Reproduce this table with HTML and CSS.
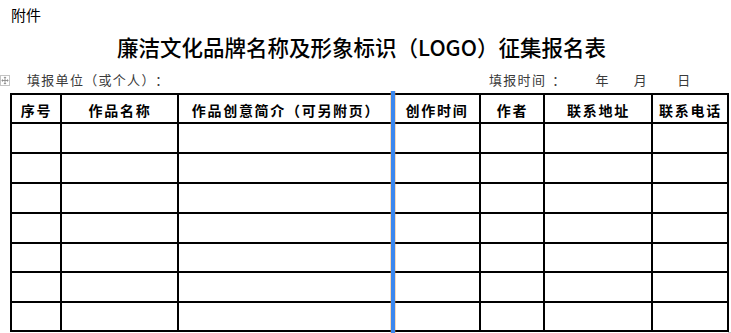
FILE: index.html
```html
<!DOCTYPE html>
<html lang="zh">
<head>
<meta charset="utf-8">
<title>廉洁文化品牌名称及形象标识（LOGO）征集报名表</title>
<link rel="stylesheet" href="styles.css">
</head>
<body>
<div class="page">
  <div class="att">附件</div>
  <h1 class="title">廉洁文化品牌名称及形象标识（LOGO）征集报名表</h1>
  <div class="info">
    <span class="handle">
      <svg width="10" height="11" viewBox="0 0 10 11">
        <rect x="0.5" y="0.5" width="9" height="10" fill="#fff" stroke="#c4c4c4"/>
        <path d="M5 2.6V8.4M2.2 5.5H7.8" stroke="#8a8a8a" stroke-width="0.9" fill="none"/>
        <path d="M5 1.5L3.5 3.1H6.5Z M5 9.5L3.5 7.9H6.5Z M1.3 5.5L2.9 4V7Z M8.7 5.5L7.1 4V7Z" fill="#8a8a8a"/>
      </svg>
    </span>
    <span class="unit">填报单位（或个人）<span class="colon">：</span></span>
    <span class="date">
      <span class="date-label">填报时间<span class="colon">：</span></span>
      <span class="y">年</span>
      <span class="m">月</span>
      <span class="d">日</span>
    </span>
  </div>
  <div class="sheet">
    <div class="grid">
      <div class="cell head">序号</div>
      <div class="cell head">作品名称</div>
      <div class="cell head">作品创意简介（可另附页）</div>
      <div class="cell head">创作时间</div>
      <div class="cell head">作者</div>
      <div class="cell head">联系地址</div>
      <div class="cell head">联系电话</div>

      <div class="cell"></div><div class="cell"></div><div class="cell"></div><div class="cell"></div><div class="cell"></div><div class="cell"></div><div class="cell"></div>
      <div class="cell"></div><div class="cell"></div><div class="cell"></div><div class="cell"></div><div class="cell"></div><div class="cell"></div><div class="cell"></div>
      <div class="cell"></div><div class="cell"></div><div class="cell"></div><div class="cell"></div><div class="cell"></div><div class="cell"></div><div class="cell"></div>
      <div class="cell"></div><div class="cell"></div><div class="cell"></div><div class="cell"></div><div class="cell"></div><div class="cell"></div><div class="cell"></div>
      <div class="cell"></div><div class="cell"></div><div class="cell"></div><div class="cell"></div><div class="cell"></div><div class="cell"></div><div class="cell"></div>
      <div class="cell"></div><div class="cell"></div><div class="cell"></div><div class="cell"></div><div class="cell"></div><div class="cell"></div><div class="cell"></div>
      <div class="cell"></div><div class="cell"></div><div class="cell"></div><div class="cell"></div><div class="cell"></div><div class="cell"></div><div class="cell"></div>
    </div>
    <div class="col-marker"></div>
    <div class="resize"></div>
  </div>
</div>
</body>
</html>
```

FILE: styles.css
```css
* { box-sizing: border-box; }
html, body { margin: 0; padding: 0; background: #fff; }
body {
  width: 731px;
  height: 333px;
  overflow: hidden;
  font-family: "Noto Sans CJK SC", "Noto Sans", sans-serif;
  color: #000;
}
.page { padding-top: 5px; position: relative; }
.att {
  margin-left: 11px;
  font-size: 15px;
  line-height: 20px;
  height: 20px;
}
.title {
  margin: 8px 0 0 0;
  padding-right: 8px;
  text-align: center;
  font-size: 21.5px;
  line-height: 28px;
  height: 28px;
  font-weight: 500;
  letter-spacing: 0;
  white-space: nowrap;
}
.info {
  margin-top: 10px;
  height: 18px;
  display: flex;
  align-items: center;
  font-size: 13px;
  line-height: 18px;
  letter-spacing: 1.3px;
  color: #3a3a3a;
  position: relative;
  white-space: nowrap;
}
.colon { padding-left: 6px; }
.handle {
  position: absolute;
  left: 0;
  top: 4px;
  width: 10px;
  height: 11px;
  display: block;
}
.handle svg { display: block; }
.unit { margin-left: 27px; }
.date { margin-left: auto; width: 242px; display: flex; }
.y { margin-left: 29px; }
.m { margin-left: 24px; }
.d { margin-left: 29px; }

.sheet {
  position: relative;
  margin-top: 4px;
  margin-left: 10px;
  width: 719px;
}
.grid {
  display: grid;
  grid-template-columns: 50px 117px 215px 87px 64px 108px 76px;
  grid-template-rows: 29px 30px 30px 30px 30px 29px 30px 29px;
  border-left: 2px solid #000;
  border-top: 2px solid #000;
}
.cell {
  border-right: 2px solid #000;
  border-bottom: 2px solid #000;
}
.head {
  display: flex;
  align-items: center;
  justify-content: center;
  font-size: 14px;
  font-weight: 700;
  letter-spacing: 1.7px;
  padding-left: 1px;
  white-space: nowrap;
  padding-top: 2px;
}
.col-marker {
  position: absolute;
  left: 381px;
  top: -2px;
  bottom: -4px;
  width: 4px;
  background: #3b87ee;
  box-shadow: -0.5px 0 0 rgba(235, 150, 60, 0.7), 0.5px 0 0 rgba(235, 150, 60, 0.7);
}
.resize {
  position: absolute;
  right: -2px;
  bottom: -3px;
  width: 3px;
  height: 3px;
  border: 1px solid #c8c8c8;
  background: #fff;
}
```
